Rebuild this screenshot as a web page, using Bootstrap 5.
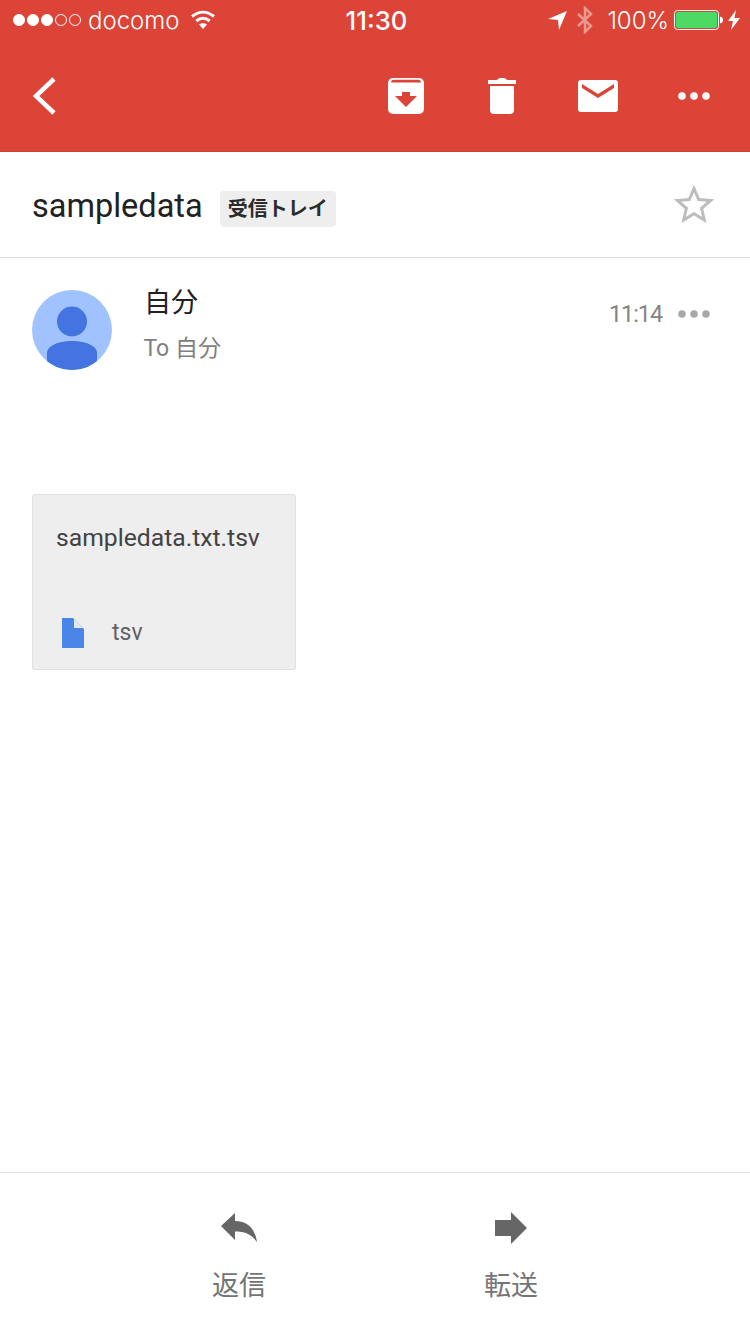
<!DOCTYPE html>
<html lang="ja">
<head>
<meta charset="utf-8">
<title>sampledata</title>
<link href="https://cdn.jsdelivr.net/npm/bootstrap@5.3.0/dist/css/bootstrap.min.css" rel="stylesheet">
<style>
html,body{margin:0;height:100%}
body{font-family:Roboto,"Noto Sans CJK JP",sans-serif;background:#fff;color:#212121}
.screen{width:750px;height:1334px;overflow:hidden}
.app-head{background:#db4437;height:152px;color:#fff;border-bottom:1px solid #cf4034}
.status{height:40px;padding:0 10px 0 13px;font-family:Inter,"Liberation Sans",sans-serif;font-size:24px;font-weight:300;line-height:40px}
.status-side{flex:1 1 0;min-width:0}
.status-text{padding-top:2px}
.status-time{font-weight:500;font-size:25.700px;padding-top:2px}
.sig{width:12px;height:12px;border-radius:50%;background:#fff;margin-right:2px;flex:none;border:1px solid #fff}
.sig-off{background:transparent}
.carrier{margin-left:5px}
.wifi{margin-left:10px}
.bt{margin-left:8px}
.pct{margin-left:13px}
.batt{margin-left:5px}
.bolt{margin-left:5px}
.tool{height:111px;padding-right:8px}
.back{padding-left:32px}
.slot{width:96px;display:flex;justify-content:center}
.subject{height:106px;padding:0 36px 0 32px;border-bottom:1px solid #dedede}
.subject-text{font-size:32.500px;line-height:40px;letter-spacing:0;margin-top:3px}
.tag{background:#eee;border-radius:4px;height:36px;width:116px;margin-left:17px;font-size:20px;font-weight:700;line-height:36px;text-align:center;color:#2b2b2b;margin-top:8px}
.fav{margin-bottom:2px}
.sender{padding:32px 40px 0 32px}
.who{margin-left:32px}
.who-name{font-size:27px;line-height:26px}
.who-to{font-size:23px;line-height:28px;color:#7f7f7f;margin-top:19px;margin-left:-0.500px}
.when{font-size:23.500px;line-height:28px;color:#858585;margin-top:10px;letter-spacing:-1.100px}
.when-more{margin-top:20px}
.att{width:264px;height:176px;margin:124px 0 0 32px;background:#eee;border:1px solid #e0e0e0;border-radius:3px;padding:0 0 0 23px}
.att-name{font-size:24.700px;line-height:30px;color:#424242;margin-top:28px}
.att-type{margin-top:65px;font-size:23px;line-height:30px;color:#616161}
.att-type svg{margin:0 28px 0 6px}
.foot{height:162px;border-top:1px solid #dedede;color:#757575;font-size:27px;line-height:32px}
.act{width:272px;padding-top:39px}
.act svg{display:block;margin-bottom:26px}
</style>
</head>
<body>
<div class="screen d-flex flex-column">
  <header class="app-head">
    <div class="status d-flex align-items-center">
      <div class="status-side d-flex align-items-center">
        <span class="sig"></span><span class="sig"></span><span class="sig"></span><span class="sig sig-off"></span><span class="sig sig-off"></span>
        <span class="carrier status-text">docomo</span>
        <svg class="wifi" width="26" height="20" viewBox="0 0 26 20" aria-hidden="true"><g fill="none" stroke="#fff" stroke-width="3"><path d="M2 6.500C9 .7 17 .7 24 6.500"/><path d="M6.300 11C10.500 7.600 15.500 7.600 19.700 11"/></g><path d="M9 14.500C11.500 12.700 14.500 12.700 17 14.500L13 19Z" fill="#fff"/></svg>
      </div>
      <div class="status-time">11:30</div>
      <div class="status-side d-flex align-items-center justify-content-end">
        <svg width="20" height="20" viewBox="0 0 20 20" aria-hidden="true"><path d="M19 1 11 20 10 10 0 9Z" fill="#fff"/></svg>
        <svg class="bt" width="18" height="28" viewBox="0 0 18 28" aria-hidden="true"><path d="M2 8 15 20 9 26V2L15 8 2 20" fill="none" stroke="#fff" stroke-opacity=".45" stroke-width="2.500"/></svg>
        <span class="pct status-text">100%</span>
        <svg class="batt" width="49" height="20" viewBox="0 0 49 20" aria-hidden="true"><rect x=".5" y=".5" width="44" height="19" rx="3" fill="none" stroke="#fff"/><rect x="2" y="2" width="41" height="16" rx="2" fill="#4cd964"/><path d="M46 6.500c1.800.3 3 1.500 3 3.500s-1.200 3.200-3 3.500Z" fill="#fff"/></svg>
        <svg class="bolt" width="12" height="20" viewBox="0 0 12 20" aria-hidden="true"><path d="M8 0 0 11H5L3 20 12 8H6.500Z" fill="#fff"/></svg>
      </div>
    </div>
    <div class="tool d-flex align-items-center">
      <div class="back">
        <svg class="d-block" width="26" height="40" viewBox="0 0 26 40" aria-hidden="true"><path d="M22 3 4 20 22 37" fill="none" stroke="#fff" stroke-width="4.500"/></svg>
      </div>
      <div class="ms-auto d-flex align-items-center">
        <div class="slot"><svg width="36" height="36" viewBox="0 0 36 36" aria-hidden="true"><path d="M5 0H31A5 5 0 0 1 36 5V31A5 5 0 0 1 31 36H5A5 5 0 0 1 0 31V5A5 5 0 0 1 5 0Z" fill="#fff"/><path d="M3 4.500C3 3 4 1.700 6 1.700H30C32 1.700 33 3 33 4.500Z" fill="#db4437"/><path d="M14 14H22V18H29L18 29 7 18H14Z" fill="#db4437"/></svg></div>
        <div class="slot"><svg width="28" height="36" viewBox="0 0 28 36" aria-hidden="true"><path d="M0 2H9C10 .5 11 0 14 0S18 .5 19 2H28V6H0ZM2 8H26V32A4 4 0 0 1 22 36H6A4 4 0 0 1 2 32Z" fill="#fff"/></svg></div>
        <div class="slot"><svg width="40" height="32" viewBox="0 0 40 32" aria-hidden="true"><rect width="40" height="32" rx="3" fill="#fff"/><path d="M4 4 20 14 36 4V8L20 18 4 8Z" fill="#db4437"/></svg></div>
        <div class="slot"><svg width="32" height="8" viewBox="0 0 32 8" aria-hidden="true"><circle cx="4" cy="4" r="3.800" fill="#fff"/><circle cx="16" cy="4" r="3.800" fill="#fff"/><circle cx="28" cy="4" r="3.800" fill="#fff"/></svg></div>
      </div>
    </div>
  </header>

  <section class="subject d-flex align-items-center">
    <div class="subject-text">sampledata</div>
    <div class="tag">受信トレイ</div>
    <svg class="ms-auto fav" width="40" height="38" viewBox="0 0 40 38" aria-hidden="true"><path d="M20 3.500 24.700 14.500 36.600 15.500 27.600 23.300 30.300 35 20 28.800 9.700 35 12.400 23.300 3.400 15.500 15.300 14.500Z" fill="none" stroke="#bdbdbd" stroke-width="3"/></svg>
  </section>

  <section class="sender d-flex align-items-start">
    <svg class="flex-shrink-0" width="80" height="80" viewBox="0 0 80 80" aria-hidden="true"><defs><clipPath id="av"><circle cx="40" cy="40" r="40"/></clipPath></defs><circle cx="40" cy="40" r="40" fill="#a0c3ff"/><circle cx="40" cy="31.500" r="15" fill="#4374e0"/><path d="M15 80V63C15 56 26 51 40 51S65 56 65 63V80Z" fill="#4374e0" clip-path="url(#av)"/></svg>
    <div class="who">
      <div class="who-name">自分</div>
      <div class="who-to">To 自分</div>
    </div>
    <div class="when ms-auto">11:14</div>
    <svg class="ms-3 when-more" width="32" height="8" viewBox="0 0 32 8" aria-hidden="true"><circle cx="4" cy="4" r="3.800" fill="#a8a8a8"/><circle cx="16" cy="4" r="3.800" fill="#a8a8a8"/><circle cx="28" cy="4" r="3.800" fill="#a8a8a8"/></svg>
  </section>

  <section class="att">
    <div class="att-name">sampledata.txt.tsv</div>
    <div class="att-type d-flex align-items-center">
      <svg width="22" height="30" viewBox="0 0 22 30" aria-hidden="true"><path d="M0 0H11L22 11V30H0Z" fill="#4a86e8"/><path d="M12 1 21 10H12Z" fill="#e3ebf8"/></svg>
      <span>tsv</span>
    </div>
  </section>

  <footer class="foot mt-auto d-flex justify-content-center">
    <div class="act d-flex flex-column align-items-center">
      <svg width="36" height="32" viewBox="0 0 36 32" aria-hidden="true"><path d="M0 14 14 1V9C26 9 34 16 36 30 30 22 24 19.500 14 19.500V28Z" fill="#666"/></svg>
      <span>返信</span>
    </div>
    <div class="act d-flex flex-column align-items-center">
      <svg width="32" height="32" viewBox="0 0 32 32" aria-hidden="true"><path d="M0 8H16V0L32 16 16 32V24H0Z" fill="#666"/></svg>
      <span>転送</span>
    </div>
  </footer>
</div>
<script src="https://cdn.jsdelivr.net/npm/bootstrap@5.3.0/dist/js/bootstrap.bundle.min.js"></script>
</body>
</html>
